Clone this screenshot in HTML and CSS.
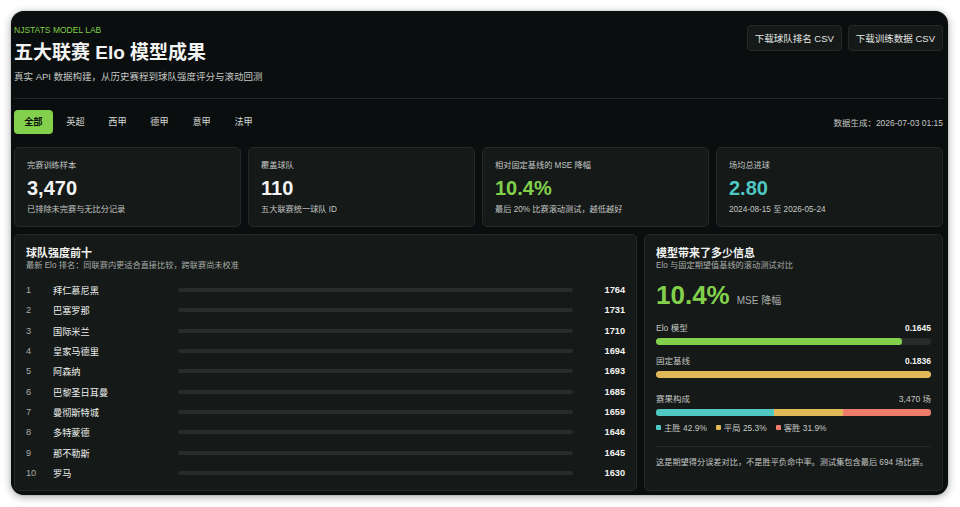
FILE: index.html
```html
<!DOCTYPE html>
<html lang="zh-CN">
<head>
  <meta charset="utf-8">
  <title>五大联赛 Elo 模型成果</title>
  <link rel="stylesheet" href="styles.css">
</head>
<body>
  <div class="window">

    <!-- Header -->
    <header class="top">
      <div>
        <div class="eyebrow">NJSTATS MODEL LAB</div>
        <h1>五大联赛 Elo 模型成果</h1>
        <p class="lead">真实 API 数据构建，从历史赛程到球队强度评分与滚动回测</p>
      </div>
      <div class="actions">
        <button class="btn">下载球队排名 CSV</button>
        <button class="btn">下载训练数据 CSV</button>
      </div>
    </header>

    <!-- Tabs -->
    <div class="toolbar">
      <div class="tabs">
        <span class="tab active">全部</span>
        <span class="tab">英超</span>
        <span class="tab">西甲</span>
        <span class="tab">德甲</span>
        <span class="tab">意甲</span>
        <span class="tab">法甲</span>
      </div>
      <div class="stamp">数据生成：2026-07-03 01:15</div>
    </div>

    <!-- Stat cards -->
    <div class="stats">
      <div class="card">
        <div class="card-label">完赛训练样本</div>
        <div class="card-value">3,470</div>
        <div class="card-note">已排除未完赛与无比分记录</div>
      </div>
      <div class="card">
        <div class="card-label">覆盖球队</div>
        <div class="card-value">110</div>
        <div class="card-note">五大联赛统一球队 ID</div>
      </div>
      <div class="card">
        <div class="card-label">相对固定基线的 MSE 降幅</div>
        <div class="card-value green">10.4%</div>
        <div class="card-note">最后 20% 比赛滚动测试，越低越好</div>
      </div>
      <div class="card">
        <div class="card-label">场均总进球</div>
        <div class="card-value teal">2.80</div>
        <div class="card-note">2024-08-15 至 2026-05-24</div>
      </div>
    </div>

    <!-- Panels -->
    <div class="panels">
      <section class="panel">
        <h2>球队强度前十</h2>
        <p class="panel-sub">最新 Elo 排名：同联赛内更适合直接比较，跨联赛尚未校准</p>
        <ol class="ranking">
          <li><span class="rank">1</span><span class="team">拜仁慕尼黑</span><span class="track"></span><span class="elo">1764</span></li>
          <li><span class="rank">2</span><span class="team">巴塞罗那</span><span class="track"></span><span class="elo">1731</span></li>
          <li><span class="rank">3</span><span class="team">国际米兰</span><span class="track"></span><span class="elo">1710</span></li>
          <li><span class="rank">4</span><span class="team">皇家马德里</span><span class="track"></span><span class="elo">1694</span></li>
          <li><span class="rank">5</span><span class="team">阿森纳</span><span class="track"></span><span class="elo">1693</span></li>
          <li><span class="rank">6</span><span class="team">巴黎圣日耳曼</span><span class="track"></span><span class="elo">1685</span></li>
          <li><span class="rank">7</span><span class="team">曼彻斯特城</span><span class="track"></span><span class="elo">1659</span></li>
          <li><span class="rank">8</span><span class="team">多特蒙德</span><span class="track"></span><span class="elo">1646</span></li>
          <li><span class="rank">9</span><span class="team">那不勒斯</span><span class="track"></span><span class="elo">1645</span></li>
          <li><span class="rank">10</span><span class="team">罗马</span><span class="track"></span><span class="elo">1630</span></li>
        </ol>
      </section>

      <section class="panel">
        <h2>模型带来了多少信息</h2>
        <p class="panel-sub">Elo 与固定期望值基线的滚动测试对比</p>
        <div class="big">
          <span class="big-num">10.4%</span>
          <span class="big-unit">MSE 降幅</span>
        </div>

        <div class="metric">
          <div class="metric-head"><span>Elo 模型</span><b>0.1645</b></div>
          <div class="bar"><div class="fill green-bg" style="width: 89.6%"></div></div>
        </div>
        <div class="metric">
          <div class="metric-head"><span>固定基线</span><b>0.1836</b></div>
          <div class="bar"><div class="fill yellow-bg" style="width: 100%"></div></div>
        </div>

        <div class="metric outcome">
          <div class="metric-head"><span>赛果构成</span><span>3,470 场</span></div>
          <div class="bar stack">
            <div class="fill teal-bg" style="width: 42.9%"></div>
            <div class="fill yellow-bg" style="width: 25.3%"></div>
            <div class="fill red-bg" style="width: 31.9%"></div>
          </div>
          <div class="legend">
            <span><i class="dot teal-bg"></i>主胜 42.9%</span>
            <span><i class="dot yellow-bg"></i>平局 25.3%</span>
            <span><i class="dot red-bg"></i>客胜 31.9%</span>
          </div>
        </div>

        <p class="footnote">这是期望得分误差对比，不是胜平负命中率。测试集包含最后 694 场比赛。</p>
      </section>
    </div>

  </div>
</body>
</html>
```

FILE: styles.css
```css
:root {
  --bg: #0b0e0e;
  --panel: #151917;
  --border: #252a28;
  --track: #272c2a;
  --text: #f2f3f2;
  --muted: #a9adab;
  --green: #82d04b;
  --teal: #4fc7c2;
  --yellow: #e2b858;
  --red: #ee7c6b;
}

* {
  box-sizing: border-box;
}

body {
  margin: 0;
  padding: 11px 12px 12px 11px;
  background: #ffffff;
  font-family: "Liberation Sans", "Noto Sans CJK SC", sans-serif;
  color: var(--text);
}

.window {
  height: 484px;
  overflow: hidden;
  background: var(--bg);
  border-radius: 13px;
  padding: 13px 5px 0 3px;
  box-shadow: 0 2px 8px rgba(0, 0, 0, 0.35), 0 0 1px rgba(0, 0, 0, 0.5);
}

/* header */
.top {
  display: flex;
  justify-content: space-between;
  align-items: flex-start;
  padding-bottom: 14px;
  border-bottom: 1px solid var(--border);
}

.eyebrow {
  font-size: 8.5px;
  line-height: 12px;
  color: var(--green);
}

h1 {
  margin: 4px 0 0;
  font-size: 19px;
  line-height: 26px;
  font-weight: 700;
}

.lead {
  margin: 4px 0 0;
  font-size: 9.5px;
  line-height: 14px;
  color: #c4c7c5;
}

.actions {
  display: flex;
  gap: 6px;
  margin-top: 1px;
}

.btn {
  height: 26px;
  padding: 0 7px;
  font-family: inherit;
  font-size: 9.5px;
  color: #e4e6e5;
  background: var(--panel);
  border: 1px solid var(--border);
  border-radius: 4px;
}

/* tabs */
.toolbar {
  display: flex;
  justify-content: space-between;
  align-items: center;
  margin-top: 11px;
}

.tabs {
  display: flex;
  gap: 3.3px;
}

.tab {
  height: 24px;
  line-height: 24px;
  padding: 0 10.2px;
  font-size: 9.2px;
  color: #d6d8d7;
  border-radius: 4px;
}

.tab.active {
  background: var(--green);
  color: #0b0e0e;
  font-weight: 700;
}

.stamp {
  font-size: 8.5px;
  color: #c4c7c5;
}

/* stat cards */
.stats {
  display: grid;
  grid-template-columns: repeat(4, 1fr);
  gap: 7px;
  margin-top: 13px;
}

.card {
  height: 80px;
  padding: 12px 12px;
  background: var(--panel);
  border: 1px solid var(--border);
  border-radius: 5px;
}

.card-label {
  font-size: 8.2px;
  line-height: 12px;
  color: #c4c7c5;
}

.card-value {
  margin-top: 5px;
  font-size: 20px;
  line-height: 22px;
  font-weight: 700;
}

.card-note {
  margin-top: 5px;
  font-size: 8.2px;
  line-height: 12px;
  color: #c4c7c5;
}

.green {
  color: var(--green);
}

.teal {
  color: var(--teal);
}

/* panels */
.panels {
  display: grid;
  grid-template-columns: 1fr 299px;
  gap: 7px;
  margin-top: 7px;
}

.panel {
  padding: 11px 11px 7px;
  background: var(--panel);
  border: 1px solid var(--border);
  border-radius: 5px;
}

h2 {
  margin: 0;
  font-size: 11px;
  line-height: 14px;
  font-weight: 700;
}

.panel-sub {
  margin: 0;
  font-size: 8.2px;
  line-height: 12px;
  color: var(--muted);
}

.ranking {
  list-style: none;
  margin: 8px 0 0;
  padding: 0;
}

.ranking li {
  display: grid;
  grid-template-columns: 27px 125px 1fr 52px;
  align-items: center;
  height: 20.3px;
  font-size: 9.2px;
}

.rank {
  color: var(--muted);
}

.team {
  color: #eceeed;
}

.track {
  height: 4px;
  border-radius: 2px;
  background: var(--track);
}

.elo {
  text-align: right;
  font-weight: 700;
}

/* model panel */
.big {
  display: flex;
  align-items: baseline;
  gap: 7px;
  margin-top: 8px;
  height: 30px;
}

.big-num {
  font-size: 26px;
  line-height: 30px;
  font-weight: 700;
  color: var(--green);
}

.big-unit {
  font-size: 10px;
  color: var(--muted);
}

.metric {
  margin-top: 12px;
}

.metric + .metric {
  margin-top: 10px;
}

.metric.outcome {
  margin-top: 15px;
}

.metric-head {
  display: flex;
  justify-content: space-between;
  font-size: 8.5px;
  line-height: 12px;
  color: #c4c7c5;
}

.metric-head b {
  color: var(--text);
}

.bar {
  display: flex;
  height: 7px;
  margin-top: 4px;
  border-radius: 3px;
  background: var(--track);
  overflow: hidden;
}

.fill {
  height: 100%;
  border-radius: 3px;
}

.stack .fill {
  border-radius: 0;
}

.green-bg {
  background: var(--green);
}

.yellow-bg {
  background: var(--yellow);
}

.teal-bg {
  background: var(--teal);
}

.red-bg {
  background: var(--red);
}

.legend {
  display: flex;
  gap: 9px;
  margin-top: 6px;
  font-size: 8.4px;
  line-height: 12px;
  color: #c4c7c5;
}

.dot {
  display: inline-block;
  width: 5px;
  height: 5px;
  margin-right: 3px;
  border-radius: 1px;
  vertical-align: 1px;
}

.footnote {
  margin: 12px 0 0;
  padding-top: 10px;
  border-top: 1px solid var(--border);
  font-size: 8.2px;
  line-height: 12px;
  color: #c4c7c5;
  white-space: nowrap;
}
```
